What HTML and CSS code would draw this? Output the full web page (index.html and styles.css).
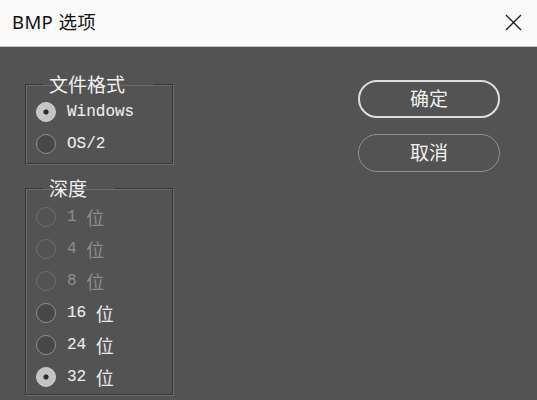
FILE: index.html
```html
<!DOCTYPE html>
<html lang="zh-CN">
<head>
<meta charset="utf-8">
<title>BMP 选项</title>
<link rel="stylesheet" href="styles.css">
</head>
<body>
<div class="titlebar">
  <span class="title">BMP 选项</span>
  <svg class="close" width="17" height="17" viewBox="0 0 17 17"><path d="M1 1 L16 16 M16 1 L1 16" stroke="#1e1e1e" stroke-width="1.3" fill="none"/></svg>
</div>
<div class="content">
  <div class="left">
    <fieldset class="group">
      <legend class="legend">文件格式</legend>
      <label class="opt"><input type="radio" name="fmt" class="radio" checked><span class="mono">Windows</span></label>
      <label class="opt"><input type="radio" name="fmt" class="radio"><span class="mono">OS/2</span></label>
    </fieldset>
    <fieldset class="group group-depth">
      <legend class="legend">深度</legend>
      <label class="opt disabled"><input type="radio" name="d" class="radio" disabled><span class="mono">1 </span><span class="cjk">位</span></label>
      <label class="opt disabled"><input type="radio" name="d" class="radio" disabled><span class="mono">4 </span><span class="cjk">位</span></label>
      <label class="opt disabled"><input type="radio" name="d" class="radio" disabled><span class="mono">8 </span><span class="cjk">位</span></label>
      <label class="opt"><input type="radio" name="d" class="radio"><span class="mono">16 </span><span class="cjk">位</span></label>
      <label class="opt"><input type="radio" name="d" class="radio"><span class="mono">24 </span><span class="cjk">位</span></label>
      <label class="opt"><input type="radio" name="d" class="radio" checked><span class="mono">32 </span><span class="cjk">位</span></label>
    </fieldset>
  </div>
  <div class="buttons">
    <button class="btn btn-default">确定</button>
    <button class="btn">取消</button>
  </div>
</div>
</body>
</html>
```
FILE: styles.css
```css
html, body {
  margin: 0;
  padding: 0;
}
body {
  background: #535353;
  width: 537px;
  height: 400px;
  overflow: hidden;
  font-family: "Noto Sans", "Noto Sans CJK SC", sans-serif;
}
.titlebar {
  height: 46px;
  background: #fafafa;
  border-bottom: 1px solid #c4c4c4;
  display: flex;
  align-items: center;
  justify-content: space-between;
  padding: 0 15px 0 12px;
}
.title {
  font-size: 18.5px;
  letter-spacing: 0.4px;
  color: #111;
  line-height: 24px;
  margin-top: -2px;
}
.close {
  display: block;
  margin-top: -2px;
}
.content {
  display: flex;
  justify-content: space-between;
  padding: 26px 37px 0 25px;
}
.left {
  display: flex;
  flex-direction: column;
  gap: 13px;
}
.group {
  margin: 0;
  width: 148px;
  box-sizing: border-box;
  border: 1px solid #383838;
  box-shadow: 1px 1px 0 #6c6c6c, inset 1px 1px 0 #6c6c6c;
  padding: 1px 0 3px 0;
  display: flex;
  flex-direction: column;
}
.group-depth {
  padding-top: 2px;
  padding-bottom: 1px;
}
.legend {
  margin-left: 17px;
  padding: 0 28px 0 6px;
  font-family: "Noto Sans CJK SC", sans-serif;
  font-size: 19px;
  line-height: 22px;
  color: #f2f2f2;
}
.opt {
  height: 32px;
  display: flex;
  align-items: center;
  color: #ededed;
}
.opt.disabled {
  color: #8c8c8c;
}
.radio {
  appearance: none;
  -webkit-appearance: none;
  margin: 0 11px 0 10px;
  width: 20px;
  height: 20px;
  border-radius: 50%;
  box-sizing: border-box;
  border: 1.5px solid #8e8e8e;
  background: #474747;
  flex: none;
}
.radio:checked {
  border-color: #cfcfcf;
  background: radial-gradient(circle, #2e2e2e 0 2.2px, #c4c4c4 3px);
}
.radio:disabled {
  border-color: #6e6e6e;
  background: transparent;
}
.mono {
  font-family: "Liberation Mono", monospace;
  font-size: 16px;
  white-space: pre;
  line-height: 20px;
  -webkit-text-stroke: 0.1px currentColor;
}
.cjk {
  font-family: "Noto Sans CJK SC", sans-serif;
  font-size: 18px;
  line-height: 20px;
}
.buttons {
  display: flex;
  flex-direction: column;
  gap: 16px;
  margin-top: 7px;
}
.btn {
  width: 142px;
  height: 38px;
  border-radius: 19px;
  background: transparent;
  border: 1.5px solid #8f8f8f;
  color: #f0f0f0;
  font-family: "Noto Sans CJK SC", sans-serif;
  font-size: 19px;
  line-height: 22px;
  padding: 0 0 3px 0;
}
.btn-default {
  border: 2px solid #dedede;
}
```
